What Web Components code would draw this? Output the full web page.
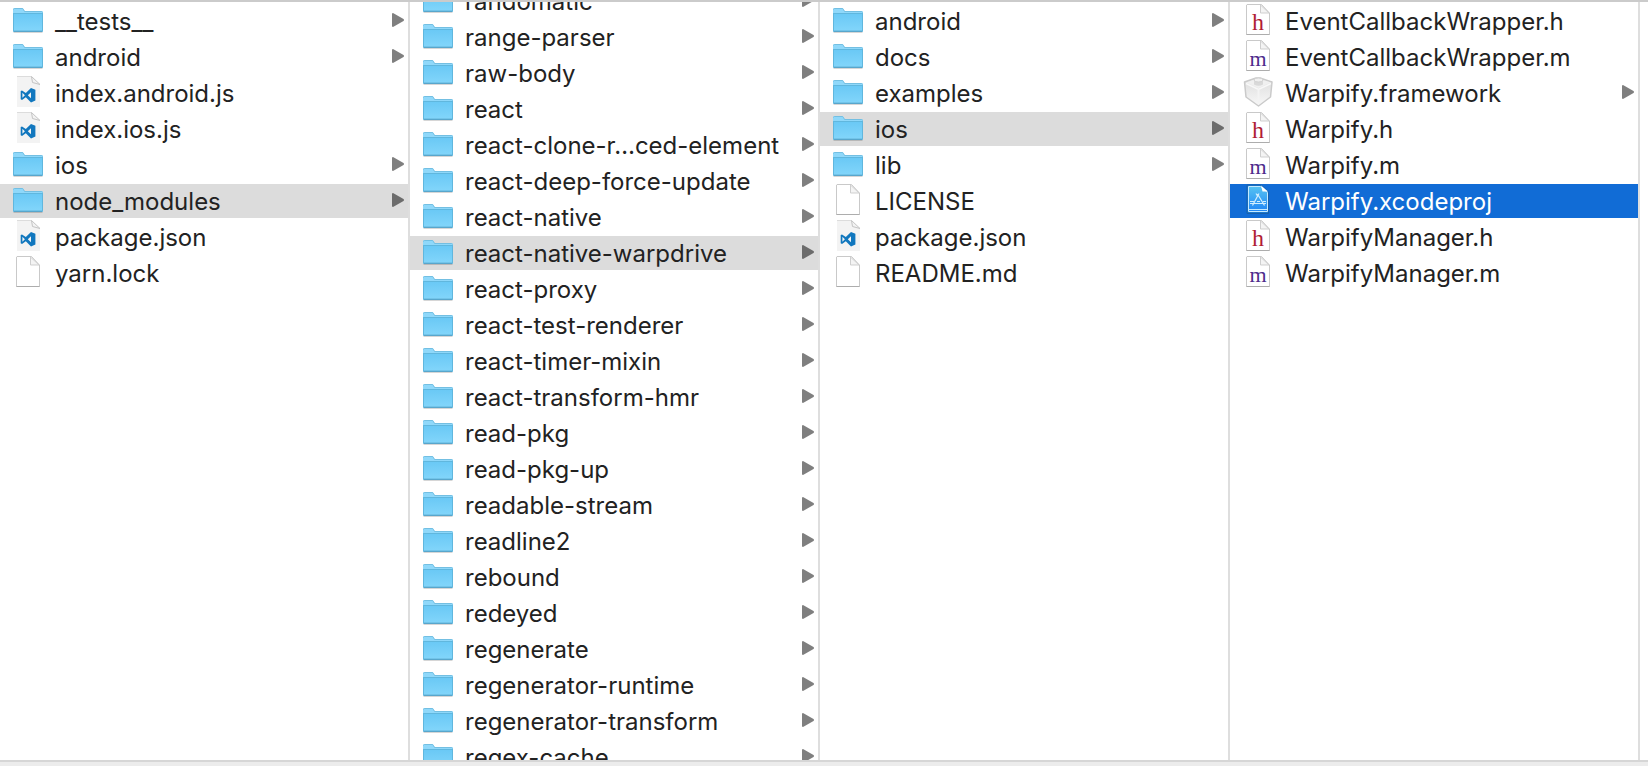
<!DOCTYPE html>
<html lang="en">
<head>
<meta charset="utf-8">
<title>Files</title>
<style>
  html, body { height: 100%; margin: 0; }
  body { font-family: Inter, "Liberation Sans", sans-serif; font-size: 24px; color: #222; background: #fff; }
</style>
</head>
<body>
<column-browser>
  <file-column label="Project">
    <file-item kind="folder" expandable>__tests__</file-item>
    <file-item kind="folder" expandable>android</file-item>
    <file-item kind="code">index.android.js</file-item>
    <file-item kind="code">index.ios.js</file-item>
    <file-item kind="folder" expandable>ios</file-item>
    <file-item kind="folder" expandable selected="path">node_modules</file-item>
    <file-item kind="code">package.json</file-item>
    <file-item kind="page">yarn.lock</file-item>
  </file-column>
  <file-column label="node_modules" scroll="20">
    <file-item kind="folder" expandable>randomatic</file-item>
    <file-item kind="folder" expandable>range-parser</file-item>
    <file-item kind="folder" expandable>raw-body</file-item>
    <file-item kind="folder" expandable>react</file-item>
    <file-item kind="folder" expandable>react-clone-r…ced-element</file-item>
    <file-item kind="folder" expandable>react-deep-force-update</file-item>
    <file-item kind="folder" expandable>react-native</file-item>
    <file-item kind="folder" expandable selected="path">react-native-warpdrive</file-item>
    <file-item kind="folder" expandable>react-proxy</file-item>
    <file-item kind="folder" expandable>react-test-renderer</file-item>
    <file-item kind="folder" expandable>react-timer-mixin</file-item>
    <file-item kind="folder" expandable>react-transform-hmr</file-item>
    <file-item kind="folder" expandable>read-pkg</file-item>
    <file-item kind="folder" expandable>read-pkg-up</file-item>
    <file-item kind="folder" expandable>readable-stream</file-item>
    <file-item kind="folder" expandable>readline2</file-item>
    <file-item kind="folder" expandable>rebound</file-item>
    <file-item kind="folder" expandable>redeyed</file-item>
    <file-item kind="folder" expandable>regenerate</file-item>
    <file-item kind="folder" expandable>regenerator-runtime</file-item>
    <file-item kind="folder" expandable>regenerator-transform</file-item>
    <file-item kind="folder" expandable>regex-cache</file-item>
  </file-column>
  <file-column label="react-native-warpdrive">
    <file-item kind="folder" expandable>android</file-item>
    <file-item kind="folder" expandable>docs</file-item>
    <file-item kind="folder" expandable>examples</file-item>
    <file-item kind="folder" expandable selected="path">ios</file-item>
    <file-item kind="folder" expandable>lib</file-item>
    <file-item kind="page">LICENSE</file-item>
    <file-item kind="code">package.json</file-item>
    <file-item kind="page">README.md</file-item>
  </file-column>
  <file-column label="ios">
    <file-item kind="header">EventCallbackWrapper.h</file-item>
    <file-item kind="source">EventCallbackWrapper.m</file-item>
    <file-item kind="framework" expandable>Warpify.framework</file-item>
    <file-item kind="header">Warpify.h</file-item>
    <file-item kind="source">Warpify.m</file-item>
    <file-item kind="xcode" selected="active">Warpify.xcodeproj</file-item>
    <file-item kind="header">WarpifyManager.h</file-item>
    <file-item kind="source">WarpifyManager.m</file-item>
  </file-column>
</column-browser>

<script>
const page = `
  <path d="M5 .5H19.500L27.500 9V30.500H4.500V1Z" fill="#fff" stroke="#c9c9c9"/>
  <path d="M4.500 30.500H27.500" stroke="#adadad"/>
  <path d="M18.500 1V9H27Z" fill="#f4f4f4" stroke="#cfcfcf" stroke-linejoin="round"/>`;

const icons = {
  folder: `
    <defs><linearGradient id="f" x1="0" y1="0" x2="0" y2="1">
      <stop offset="0" stop-color="#69c8f5"/><stop offset="1" stop-color="#83d6fb"/></linearGradient></defs>
    <path d="M1.500 28.500H30.500" stroke="#000" stroke-opacity=".16"/>
    <path d="M1 5.500Q1 4 2.500 4H10Q11 4 11.500 5L12.500 7H29.500Q31 7 31 8.500V11H1Z" fill="#8fd8fa"/>
    <path d="M1.500 5.500Q1.500 4.500 2.500 4.500H10Q11 4.500 11.500 5.500L12.500 7.500H29.500Q30.500 7.500 30.500 8.500" fill="none" stroke="#73bfe2"/>
    <path d="M1 9H31V27Q31 28 30 28H2Q1 28 1 27Z" fill="url(#f)"/>
    <path d="M1 9.500H31M1.500 9V27M30.500 9V27" stroke="#60b7de" fill="none"/>
    <path d="M2 26.500H30" stroke="#72c4e9"/>
    <path d="M1.500 27.500H30.500" stroke="#58a6cc"/>`,
  page,
  code: `
    <path d="M5 0H19.500L28 8V31H5Z" fill="#f3f3f3"/>
    <path d="M5 .5H19.500" stroke="#dcdcdc"/>
    <path d="M19.500 0H28V8Z" fill="#fff"/>
    <path d="M19.500 .5L28 8.500L20.500 6.500Z" fill="#f3f3f3" stroke="#c4c4c4"/>
    <path fill="#1177be" fill-rule="evenodd" d="M19 12L23.400 13.800V24.600L19 26.400L13.800 21.300L10 24L8.700 23.300V15.100L10 14.400L13.800 17.100ZM19 16.200L15.800 19.200L19 22.200ZM10.400 16.700V21.700L12.900 19.200Z"/>`,
  header: page + `<text x="16" y="26" text-anchor="middle" font-family="Liberation Serif, serif" font-size="24" fill="#b01c34">h</text>`,
  source: page + `<text x="16" y="26" text-anchor="middle" font-family="Liberation Serif, serif" font-size="22" fill="#4d2b8c">m</text>`,
  framework: `
    <defs><linearGradient id="w" x1="0" y1="0" x2="0" y2="1">
      <stop offset="0" stop-color="#dcdcdc"/><stop offset="1" stop-color="#f8f8f8"/></linearGradient></defs>
    <path d="M2.500 6L14 2H18L30 6L28.500 21L16.500 30L4 21Z" fill="url(#w)" stroke="#cacaca" stroke-width="1.500" stroke-linejoin="round"/>
    <path d="M4 6.500L14 3H18L29 6.500L16.500 12Z" fill="#f0f0f0"/>
    <path d="M4 7.500L16.500 13.500L29 7.500" fill="none" stroke="#f8f8f8" stroke-width="1.500"/>
    <path d="M16.500 13.500V28" stroke="#f3f3f3" stroke-width="2"/>
    <path d="M12 4V8.500Q16.500 11 21 8.500V4Z" fill="#d9d9d9"/>
    <ellipse cx="16.500" cy="4" rx="4.500" ry="2" fill="#f0f0f0" stroke="#d2d2d2"/>`,
  xcode: `
    <defs><linearGradient id="x" x1="0" y1="0" x2="0" y2="1">
      <stop offset="0" stop-color="#56c2f2"/><stop offset="1" stop-color="#2187f5"/></linearGradient></defs>
    <path d="M5 1H19.500L26.500 8V29.500H5Z" fill="#1b78cf" stroke="#1860ab"/>
    <path d="M6.500 2.500H18.500L25.500 8.500V27.500H6.500Z" fill="url(#x)" stroke="#c5eaff"/>
    <path d="M7 25.500H25" stroke="#c5eaff"/>
    <path d="M19 1.500L26 7.500H20.500Z" fill="#fff"/>
    <path d="M17 9.500L10.500 21.500M15.500 10L22.500 21.500M14 9.500L15.500 12M8 17.500H12M15 17.500H18M21 17.500H24M8 19.500H24" stroke="#d0eeff" stroke-width="1.200" fill="none"/>`
};

customElements.define('file-icon', class extends HTMLElement {
  connectedCallback() {
    this.attachShadow({ mode: 'open' }).innerHTML = `
      <style>
        :host { display: block; flex: none; width: 32px; height: 32px; }
        svg { display: block; }
      </style>
      <svg width="32" height="32" viewBox="0 0 32 32" aria-hidden="true">${icons[this.getAttribute('kind')]}</svg>`;
  }
});

customElements.define('file-item', class extends HTMLElement {
  connectedCallback() {
    this.setAttribute('role', 'listitem');
    const arrow = this.hasAttribute('expandable')
      ? '<svg class="arrow" width="12" height="14" viewBox="0 0 12 14" aria-hidden="true"><path d="M1 0L11.500 6Q12.500 7 11.500 8L1 14Q0 14 0 13V1Q0 0 1 0Z" fill="currentColor"/></svg>'
      : '';
    this.attachShadow({ mode: 'open' }).innerHTML = `
      <style>
        :host { display: block; --arrow: #7f7f7f; }
        :host([selected="path"]) { background: #dcdcdc; --arrow: #6c6c6c; }
        :host([selected="active"]) { background: #116cd6; color: #fff; }
        button { all: unset; box-sizing: border-box; display: flex; width: 100%; height: 34px; padding: 0 4px 0 12px; cursor: default; }
        .name { flex: 1; min-width: 0; margin-left: 11px; line-height: 35px; white-space: nowrap; }
        .arrow { flex: none; margin-top: 9px; color: var(--arrow); }
      </style>
      <button type="button">
        <file-icon kind="${this.getAttribute('kind')}"></file-icon>
        <span class="name"><slot></slot></span>${arrow}
      </button>`;
  }
});

customElements.define('file-column', class extends HTMLElement {
  connectedCallback() {
    this.attachShadow({ mode: 'open' }).innerHTML = `
      <style>
        :host { display: block; min-width: 0; min-height: 0; border-right: 2px solid #dedede; }
        .list { box-sizing: border-box; height: 100%; overflow-y: auto; scrollbar-width: none; padding-top: 2px; }
        ::slotted(file-item) { margin-bottom: 2px; }
      </style>
      <div class="list" role="list" aria-label="${this.getAttribute('label')}"><slot></slot></div>`;
  }
  restoreScroll() {
    this.shadowRoot.querySelector('.list').scrollTop = Number(this.getAttribute('scroll') || 0);
  }
});

customElements.define('column-browser', class extends HTMLElement {
  connectedCallback() {
    this.attachShadow({ mode: 'open' }).innerHTML = `
      <style>
        :host { display: flex; flex-direction: column; height: 100vh; border-top: 2px solid #cbcbcb; box-sizing: border-box; }
        .columns { flex: 1; min-height: 0; display: grid; grid-template-columns: repeat(4, minmax(0, 1fr)); grid-template-rows: minmax(0, 1fr); padding-right: 8px; }
        .bar { height: 4px; border-top: 2px solid #d6d6d6; background: #ececec; }
      </style>
      <div class="columns"><slot></slot></div>
      <div class="bar"></div>`;
    for (const column of this.querySelectorAll('file-column')) column.restoreScroll();
  }
});
</script>
</body>
</html>
